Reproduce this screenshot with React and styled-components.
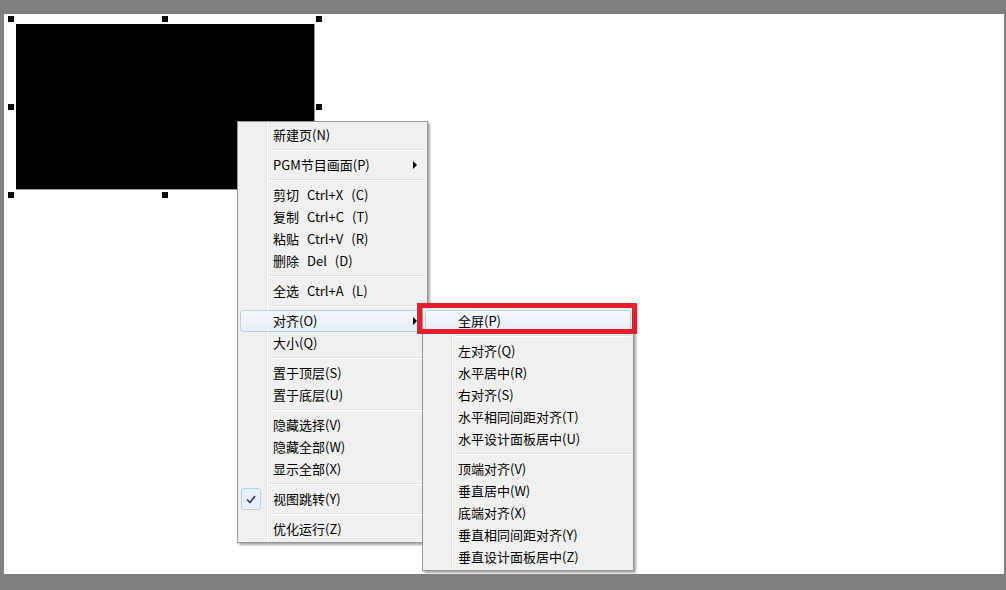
import styled, { createGlobalStyle } from 'styled-components'

const MAIN_MENU = [
  { label: ['新建页(N)'] },
  'sep',
  { label: ['PGM节目画面(P)'], submenu: true },
  'sep',
  { label: ['剪切', 'Ctrl+X', '(C)'] },
  { label: ['复制', 'Ctrl+C', '(T)'] },
  { label: ['粘贴', 'Ctrl+V', '(R)'] },
  { label: ['删除', 'Del', '(D)'] },
  'sep',
  { label: ['全选', 'Ctrl+A', '(L)'] },
  'sep',
  { label: ['对齐(O)'], submenu: true, active: true },
  { label: ['大小(Q)'] },
  'sep',
  { label: ['置于顶层(S)'] },
  { label: ['置于底层(U)'] },
  'sep',
  { label: ['隐藏选择(V)'] },
  { label: ['隐藏全部(W)'] },
  { label: ['显示全部(X)'] },
  'sep',
  { label: ['视图跳转(Y)'], checked: true },
  'sep',
  { label: ['优化运行(Z)'] },
]

const ALIGN_MENU = [
  { label: ['全屏(P)'], active: true },
  'sep',
  { label: ['左对齐(Q)'] },
  { label: ['水平居中(R)'] },
  { label: ['右对齐(S)'] },
  { label: ['水平相同间距对齐(T)'] },
  { label: ['水平设计面板居中(U)'] },
  'sep',
  { label: ['顶端对齐(V)'] },
  { label: ['垂直居中(W)'] },
  { label: ['底端对齐(X)'] },
  { label: ['垂直相同间距对齐(Y)'] },
  { label: ['垂直设计面板居中(Z)'] },
]

const GlobalStyle = createGlobalStyle`
  html, body {
    margin: 0;
    padding: 0;
    background: #808080;
  }
  body {
    font-family: "Noto Sans CJK SC", "Noto Sans", sans-serif;
  }
`

const Page = styled.div`
  box-sizing: border-box;
  width: 1006px;
  height: 590px;
  padding: 14px 2px 16px 4px;
`

const Canvas = styled.div`
  position: relative;
  height: 560px;
  background: #fff;
  overflow: hidden;
`

// selected object on the design canvas, with its eight resize handles
const SelectionFrame = styled.div`
  position: absolute;
  left: 7px;
  top: 5px;
  width: 308px;
  height: 176px;
  box-sizing: border-box;
  padding: 5px 4px 5px 5px;
  display: flex;
`

const BlackBox = styled.div`
  flex: 1;
  background: #000;
  border-right: 1px solid #9a9a9a;
  border-bottom: 1px solid #9a9a9a;
`

const Handle = styled.span`
  position: absolute;
  width: 6px;
  height: 6px;
  background: #000;
  left: ${(p) => p.$x};
  top: ${(p) => p.$y};
  transform: translate(-50%, -50%);
`

const Menu = styled.ul`
  position: absolute;
  left: ${(p) => p.$left}px;
  top: ${(p) => p.$top}px;
  width: ${(p) => p.$width}px;
  box-sizing: border-box;
  margin: 0;
  padding: 2px;
  list-style: none;
  border: 1px solid #979797;
  background:
    linear-gradient(
      to right,
      transparent 28px,
      #e2e3e3 28px,
      #e2e3e3 29px,
      #ffffff 29px,
      #ffffff 30px,
      transparent 30px
    ),
    #f0f0f0;
  box-shadow: 2px 2px 2px rgba(0, 0, 0, 0.35);
`

const Item = styled.li`
  position: relative;
  box-sizing: border-box;
  height: 22px;
  display: flex;
  align-items: center;
  gap: 8px;
  padding-left: 32px;
  font-size: 13px;
  line-height: 22px;
  color: #000;
  white-space: nowrap;
  border: 1px solid transparent;
  border-radius: 3px;
  ${(p) =>
    p.$active &&
    `
    border-color: #b9d1ec;
    background: linear-gradient(#f5f9fd, #e5eef9);
  `}
`

const Arrow = styled.span`
  position: absolute;
  right: 7px;
  top: 50%;
  margin-top: -4px;
  width: 0;
  height: 0;
  border-top: 4px solid transparent;
  border-bottom: 4px solid transparent;
  border-left: 4px solid #000;
`

const CheckBox = styled.span`
  position: absolute;
  left: 0;
  top: -1px;
  width: 20px;
  height: 22px;
  box-sizing: border-box;
  border: 1px solid #b9d1ec;
  border-radius: 3px;
  background: #e8f0fa;
  display: flex;
  align-items: center;
  justify-content: center;
`

const Separator = styled.li`
  height: 8px;
  display: flex;
  flex-direction: column;
  justify-content: center;
  padding-left: 29px;

  &::before {
    content: '';
    display: block;
    height: 1px;
    background: #e2e3e3;
  }
  &::after {
    content: '';
    display: block;
    height: 1px;
    background: #fff;
  }
`

// red annotation rectangle drawn over the "全屏" entry
const Marker = styled.div`
  position: absolute;
  left: 413px;
  top: 289px;
  width: 220px;
  height: 31px;
  box-sizing: border-box;
  border: 5px solid #e5202a;
`

const CheckIcon = () => (
  <svg width="10" height="9" viewBox="0 0 10 9">
    <path d="M1 4.5 L4 7.5 L9 1" fill="none" stroke="#1f3f8f" strokeWidth="1.7" />
  </svg>
)

const ContextMenu = ({ items, left, top, width }) => (
  <Menu $left={left} $top={top} $width={width}>
    {items.map((item, i) =>
      item === 'sep' ? (
        <Separator key={i} />
      ) : (
        <Item key={i} $active={item.active}>
          {item.checked && (
            <CheckBox>
              <CheckIcon />
            </CheckBox>
          )}
          {item.label.map((part) => (
            <span key={part}>{part}</span>
          ))}
          {item.submenu && <Arrow />}
        </Item>
      )
    )}
  </Menu>
)

const HANDLES = [
  ['0%', '0%'],
  ['50%', '0%'],
  ['100%', '0%'],
  ['0%', '50%'],
  ['100%', '50%'],
  ['0%', '100%'],
  ['50%', '100%'],
  ['100%', '100%'],
]

const App = () => (
  <>
    <GlobalStyle />
    <Page>
      <Canvas>
        <SelectionFrame>
          <BlackBox />
          {HANDLES.map(([x, y]) => (
            <Handle key={x + y} $x={x} $y={y} />
          ))}
        </SelectionFrame>
        <ContextMenu items={MAIN_MENU} left={233} top={107} width={191} />
        <ContextMenu items={ALIGN_MENU} left={418} top={293} width={212} />
        <Marker />
      </Canvas>
    </Page>
  </>
)

export default App
